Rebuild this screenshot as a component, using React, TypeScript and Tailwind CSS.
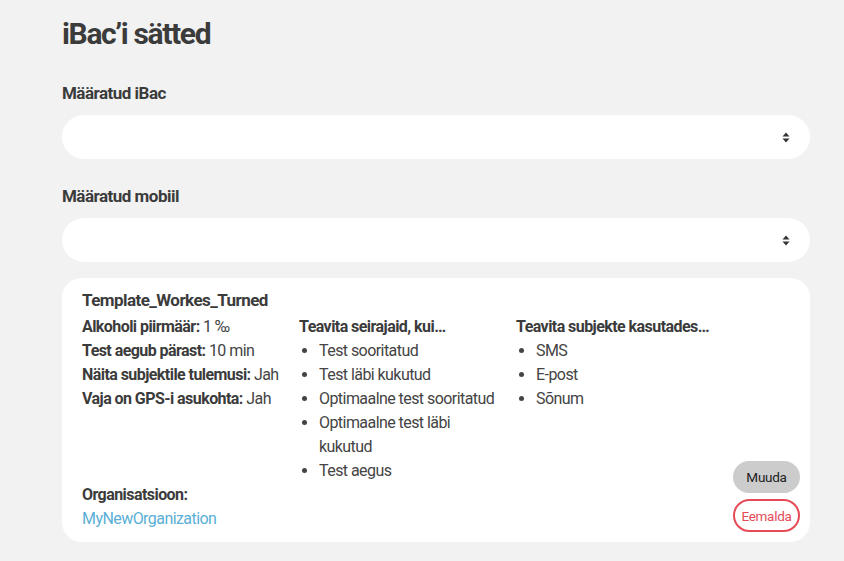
import React from 'react';

function SelectArrows() {
  return (
    <svg width="8" height="11" viewBox="0 0 8 11" className="text-[#333]">
      <path d="M4 0.5 L7.5 4.5 H0.5 Z" fill="currentColor" />
      <path d="M4 10.5 L7.5 6.5 H0.5 Z" fill="currentColor" />
    </svg>
  );
}

function PillSelect() {
  return (
    <div className="h-[44px] w-full rounded-full bg-white flex items-center justify-end pr-[20px]">
      <SelectArrows />
    </div>
  );
}

const font = { fontFamily: 'Roboto, "Liberation Sans", sans-serif' };

export default function App() {
  return (
    <div className="min-h-[561px] w-full bg-[#f2f2f2] text-[#3b3b3b]" style={font}>
      <div className="pl-[62px] pr-[34px] pt-[14px]">
        <h1 className="text-[30px] leading-[40px] font-bold tracking-[-0.045em]">iBac’i sätted</h1>

        <div className="mt-[27px] text-[17px] leading-[24px] font-bold tracking-[-0.03em]">Määratud iBac</div>
        <div className="mt-[10px]">
          <PillSelect />
        </div>

        <div className="mt-[25px] text-[17px] leading-[24px] font-bold tracking-[-0.03em]">Määratud mobiil</div>
        <div className="mt-[10px]">
          <PillSelect />
        </div>

        <div className="mt-[16px] rounded-[20px] bg-white pl-[20px] pr-[10px] pt-[10px] pb-[10px] flex text-[16px] leading-[24px] tracking-[-0.035em]">
          <div className="flex-1 pb-[1px]">
            <div className="text-[17px] font-bold mb-[3px]">Template_Workes_Turned</div>
            <div className="grid grid-cols-[217px_217px_217px]">
              <div className="text-[#444]">
                <div><span className="font-bold text-[#3b3b3b]">Alkoholi piirmäär:</span> 1 ‰</div>
                <div><span className="font-bold text-[#3b3b3b]">Test aegub pärast:</span> 10 min</div>
                <div><span className="font-bold text-[#3b3b3b]">Näita subjektile tulemusi:</span> Jah</div>
                <div><span className="font-bold text-[#3b3b3b]">Vaja on GPS-i asukohta:</span> Jah</div>
              </div>
              <div>
                <div className="font-bold">Teavita seirajaid, kui…</div>
                <ul className="list-disc pl-[20px] text-[#444] pr-[20px]">
                  <li>Test sooritatud</li>
                  <li>Test läbi kukutud</li>
                  <li>Optimaalne test sooritatud</li>
                  <li>Optimaalne test läbi kukutud</li>
                  <li>Test aegus</li>
                </ul>
              </div>
              <div>
                <div className="font-bold">Teavita subjekte kasutades…</div>
                <ul className="list-disc pl-[20px] text-[#444]">
                  <li>SMS</li>
                  <li>E-post</li>
                  <li>Sõnum</li>
                </ul>
              </div>
            </div>
            <div className="font-bold">Organisatsioon:</div>
            <div className="text-[#5aafd6]">MyNewOrganization</div>
          </div>
          <div className="flex flex-col justify-end items-end gap-[6px] text-[13.5px] leading-[20px] tracking-[-0.02em]">
            <button className="h-[32px] w-[67px] rounded-full bg-[#cccccc] text-[#222]">Muuda</button>
            <button className="h-[33px] w-[67px] rounded-full border-2 border-[#e64a57] text-[#e64a57] bg-white">Eemalda</button>
          </div>
        </div>
      </div>
    </div>
  );
}
